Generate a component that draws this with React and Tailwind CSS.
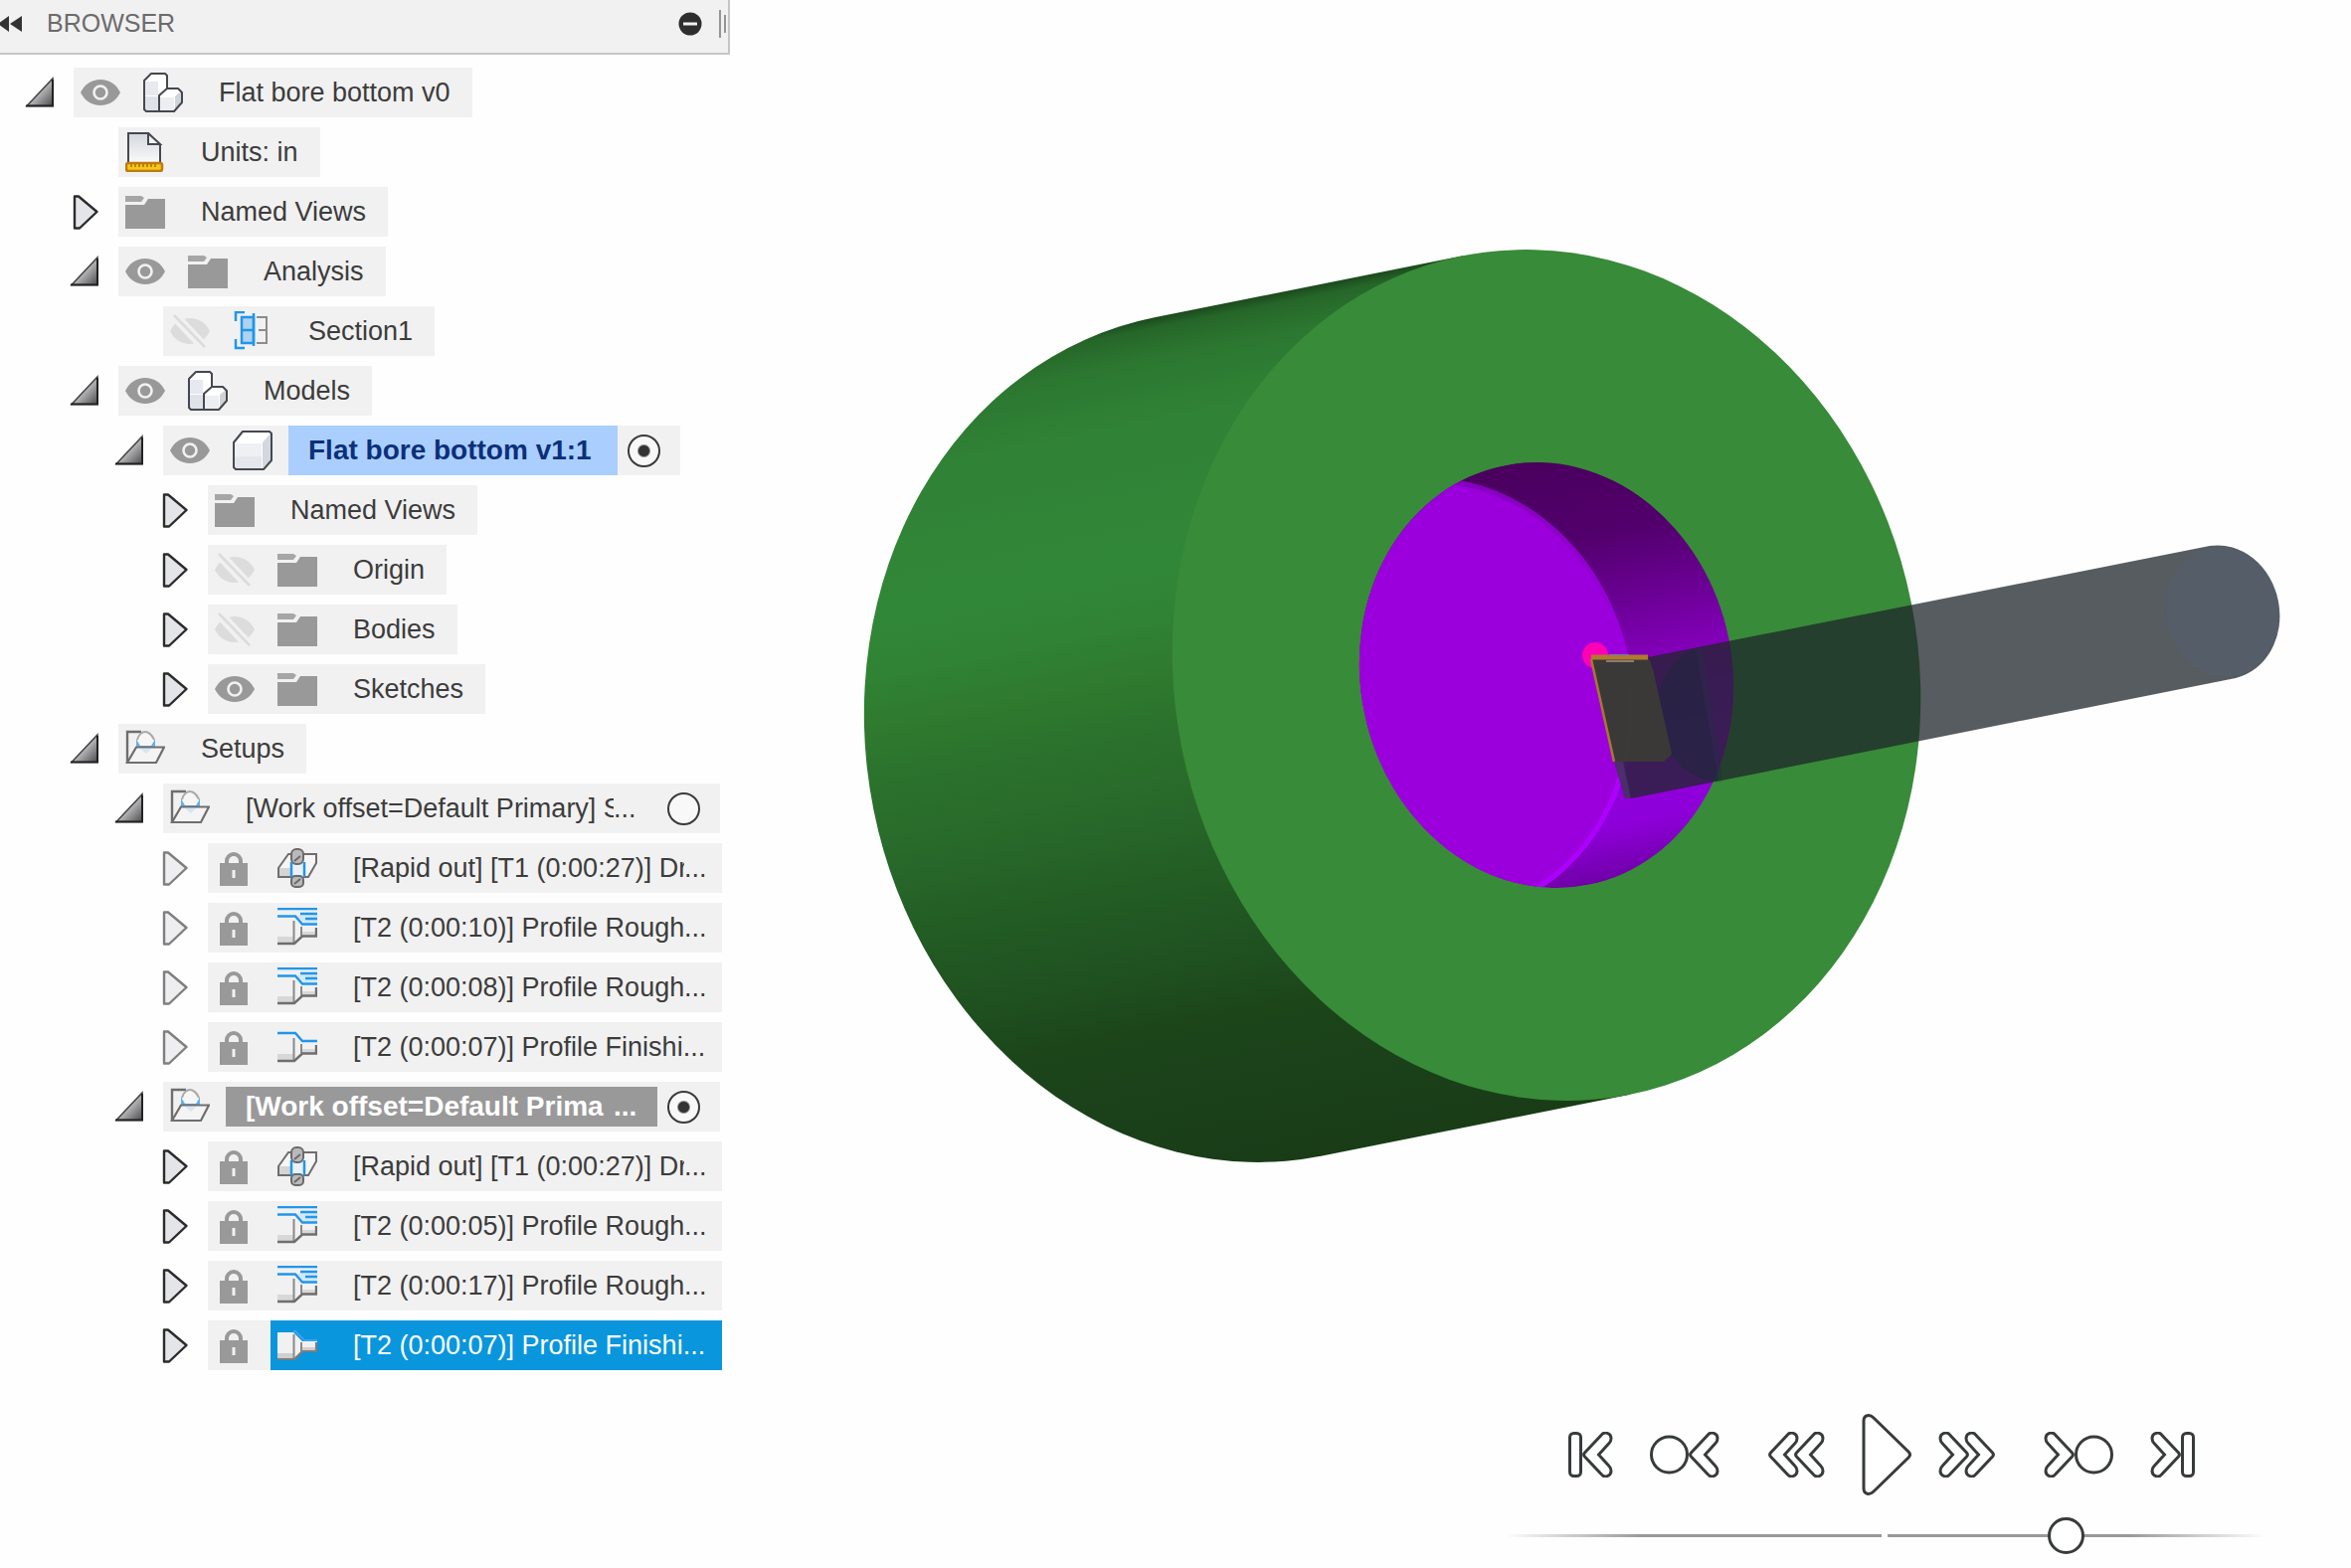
import { useState } from "react";

function EyeIcon() {
  return (
    <svg viewBox="0 0 40 40" className="size-10">
      <path d="M0 20C4 12 11 7 20 7s16 5 20 13c-4 8-11 13-20 13S4 28 0 20Z" fill="#999" />
      <circle cx="20" cy="20" r="6.5" fill="#999" stroke="#f1f1f1" strokeWidth="2.6" />
    </svg>
  );
}

function EyeOffIcon() {
  return (
    <svg viewBox="0 0 40 40" className="size-10">
      <path d="M0 20C4 12 11 7 20 7s16 5 20 13c-4 8-11 13-20 13S4 28 0 20Z" fill="#dcdcdc" />
      <path d="M3 3 35 37" stroke="#f1f1f1" strokeWidth="10" />
      <path d="M4 4 35 36" stroke="#dcdcdc" strokeWidth="2.6" />
    </svg>
  );
}

function ComponentIcon() {
  return (
    <svg viewBox="0 0 40 40" className="size-10" strokeLinejoin="round">
      <path d="M1 8 8 1h14l2 2v13h11l4 4v10l-8 9H3l-2-2Z" fill="#fff" />
      <path d="M2 9h13v14H2Z" fill="#e6e9ef" />
      <path d="M2 24h14v14H2Z" fill="#dfe2e8" />
      <path d="M17 25h14v13H17Z" fill="#eceef2" />
      <path d="M32 24l6-5v11l-6 8Z" fill="#cfd3da" />
      <path d="M1 8 8 1h14l2 2v13h11l4 4v10l-8 9H3l-2-2ZM24 16l-8 7v16" fill="none" stroke="#45484f" strokeWidth="2" />
    </svg>
  );
}

function BodyIcon() {
  return (
    <svg viewBox="0 0 40 40" className="size-10" strokeLinejoin="round">
      <path d="M1 12 10 1h27l2 2v27l-8 9H3l-2-2Z" fill="#fff" />
      <path d="M2 13h27v25H2Z" fill="#eef0f4" />
      <path d="M2 26h27v12H2Z" fill="#e4e6ec" />
      <path d="M30 12l8-9v27l-8 8Z" fill="#d3d7de" />
      <path d="M1 12 10 1h27l2 2v27l-8 9H3l-2-2Z" fill="none" stroke="#45484f" strokeWidth="2" />
    </svg>
  );
}

function UnitsIcon() {
  return (
    <svg viewBox="0 0 40 40" className="size-10">
      <defs>
        <linearGradient id="page" x1="0" y1="0" x2="0" y2="1">
          <stop offset="0" stopColor="#d3d7de" />
          <stop offset="1" stopColor="#fafafa" />
        </linearGradient>
      </defs>
      <path d="M3 31V1h20l12 12v18" fill="url(#page)" stroke="#45484f" strokeWidth="2" />
      <path d="M23 1v11h12Z" fill="#f4f5f7" stroke="#45484f" strokeWidth="2" />
      <rect x="1" y="31" width="36" height="8" rx="2" fill="#f5c716" stroke="#bf7a12" strokeWidth="2.5" />
      <path d="M6 32v3M10 32v3M14 32v3M18 32v3M22 32v3M26 32v3M30 32v3" stroke="#a86c10" strokeWidth="1.5" />
    </svg>
  );
}

function FolderIcon() {
  return (
    <svg viewBox="0 0 40 40" className="size-10">
      <path d="M0 4h16l3 2-3 4H0Z" fill="#a6a6a6" />
      <path d="M0 13h19l4-6h17v30H0Z" fill="#999" />
    </svg>
  );
}

function SectionIcon() {
  return (
    <svg viewBox="0 0 40 40" className="size-10" fill="none">
      <path d="M12 1H3v9M3 28v9h9" stroke="#2196ea" strokeWidth="2.5" />
      <path d="M9 6h12v26H9Z" fill="#aed3f0" stroke="#2196ea" strokeWidth="2.5" />
      <path d="M9 19h12M21 2v33" stroke="#2196ea" strokeWidth="2.5" />
      <path d="M24 6h10v26H24M26 19h8" stroke="#8c8c8c" strokeWidth="2" />
    </svg>
  );
}

function SetupIcon() {
  return (
    <svg viewBox="0 0 40 40" className="size-10" fill="none">
      <path d="M16 3H2v31" stroke="#6e6e6e" strokeWidth="2.4" />
      <path d="M11 10v8h19v-8l-4 6H15Z" fill="#62b2ee" />
      <path d="M12 12 17 4h7l5 8-3 5H15Z" fill="#f6f6f6" />
      <path d="M12 11c1-5 5-8 8-8s7 3 9 8" stroke="#a9a9a9" strokeWidth="2" />
      <path d="M11 18.5h28L31 34H2Z" fill="#f4f4f4" stroke="#6e6e6e" strokeWidth="2.2" />
      <path d="M15 20h11l-5 5Z" fill="#d4e6f4" />
    </svg>
  );
}

function LockIcon() {
  return (
    <svg viewBox="0 0 40 40" className="size-10">
      <path d="M12 16v-3a7 7 0 0 1 14 0v3" fill="none" stroke="#999" strokeWidth="4" />
      <path d="M5 15h28v23H5Z" fill="#999" />
      <path d="M17.5 22h3v8h-3Z" fill="#f1f1f1" />
    </svg>
  );
}

function DrillIcon() {
  return (
    <svg viewBox="0 0 40 40" className="size-10">
      <path d="M1 29v-9L11 6h28v9l-8 14Z" fill="#f6f6f6" />
      <path d="M2 20h11v8H2Z" fill="#d5d5d5" />
      <path d="M1 29v-9L11 6h28v9l-8 14Z" fill="none" stroke="#6e6e6e" strokeWidth="2" />
      <path d="M14 15h12v14H14Z" fill="#eaf1f7" />
      <rect x="14" y="1" width="12" height="15" rx="5" fill="#b9b9b9" stroke="#6a6a6a" strokeWidth="2" />
      <rect x="14" y="28" width="12" height="11" rx="4" fill="#b9b9b9" stroke="#6a6a6a" strokeWidth="2" />
      <path d="M17 13l6-5M17 36l6-5" stroke="#6a6a6a" strokeWidth="2" />
      <path d="M14 14v15M27 14v15" stroke="#2196ea" strokeWidth="2.5" />
    </svg>
  );
}

function RoughIcon() {
  return (
    <svg viewBox="0 0 40 40" className="size-10" fill="none">
      <path d="M24 6h16v10H27l-7-7Z" fill="#d5e8f7" />
      <path d="M0 1h40M23 6h17M28 11h12M0 8.5h18l7 8h15" stroke="#2196ea" strokeWidth="2.4" />
      <path d="M0 29h16v7H0ZM25 24h13v4H25Z" fill="#d8d8d8" />
      <path d="M16.5 13v22M24 19v9" stroke="#8a8a8a" strokeWidth="2" />
      <path d="M0 36h17l8-7.500h14V20" stroke="#6e6e6e" strokeWidth="2.4" />
    </svg>
  );
}

function FinishIcon() {
  return (
    <svg viewBox="0 0 40 40" className="size-10" fill="none">
      <path d="M0 6h18l7 8h15" stroke="#2196ea" strokeWidth="2.4" />
      <path d="M0 27h16v7H0ZM25 22h13v4H25Z" fill="#d8d8d8" />
      <path d="M16.5 11v22M24 17v9" stroke="#8a8a8a" strokeWidth="2" />
      <path d="M0 34h17l8-7.500h14V18" stroke="#6e6e6e" strokeWidth="2.4" />
    </svg>
  );
}

function FinishSelectedIcon() {
  return (
    <svg viewBox="0 0 40 40" className="size-10" fill="none">
      <path d="M16 6h2l9 9h13" stroke="#3fa0f5" strokeWidth="2" />
      <path d="M0 7h16l9 9h15v10H25l-8 8H0Z" fill="#f1f1f1" />
      <path d="M0 28h16v6H0ZM25 22h13v4H25Z" fill="#cfcfcf" />
      <path d="M16.5 9v24M24 17v9" stroke="#8a8a8a" strokeWidth="2" />
      <path d="M0 34h17l8-8h14v-9" stroke="#7d7d7d" strokeWidth="2.2" />
    </svg>
  );
}

const icons = {
  eye: EyeIcon,
  eyeOff: EyeOffIcon,
  component: ComponentIcon,
  body: BodyIcon,
  units: UnitsIcon,
  folder: FolderIcon,
  section: SectionIcon,
  setup: SetupIcon,
  lock: LockIcon,
  drill: DrillIcon,
  rough: RoughIcon,
  finish: FinishIcon,
  finishSelected: FinishSelectedIcon,
};

const indents = ["pl-[24px]", "pl-[69px]", "pl-[114px]", "pl-[159px]"];

const rows = [
  { level: 0, arrow: "open", icons: ["eye", "component"], label: "Flat bore bottom v0" },
  { level: 1, icons: ["units"], label: "Units: in" },
  { level: 1, arrow: "closed", icons: ["folder"], label: "Named Views" },
  { level: 1, arrow: "open", icons: ["eye", "folder"], label: "Analysis" },
  { level: 2, icons: ["eyeOff", "section"], label: "Section1" },
  { level: 1, arrow: "open", icons: ["eye", "component"], label: "Models" },
  { level: 2, arrow: "open", icons: ["eye", "body"], label: "Flat bore bottom v1:1", kind: "active", radio: "model" },
  { level: 3, arrow: "closed", icons: ["folder"], label: "Named Views" },
  { level: 3, arrow: "closed", icons: ["eyeOff", "folder"], label: "Origin" },
  { level: 3, arrow: "closed", icons: ["eyeOff", "folder"], label: "Bodies" },
  { level: 3, arrow: "closed", icons: ["eye", "folder"], label: "Sketches" },
  { level: 1, arrow: "open", icons: ["setup"], label: "Setups" },
  { level: 2, arrow: "open", icons: ["setup"], label: "[Work offset=Default Primary] S", kind: "setup", radio: "setup", value: "a" },
  { level: 3, arrow: "dim", icons: ["lock", "drill"], label: "[Rapid out] [T1 (0:00:27)] Dr", kind: "op" },
  { level: 3, arrow: "dim", icons: ["lock", "rough"], label: "[T2 (0:00:10)] Profile Rough", kind: "op" },
  { level: 3, arrow: "dim", icons: ["lock", "rough"], label: "[T2 (0:00:08)] Profile Rough", kind: "op" },
  { level: 3, arrow: "dim", icons: ["lock", "finish"], label: "[T2 (0:00:07)] Profile Finishi", kind: "op" },
  { level: 2, arrow: "open", icons: ["setup"], label: "[Work offset=Default Prima", kind: "setupActive", radio: "setup", value: "b" },
  { level: 3, arrow: "closed", icons: ["lock", "drill"], label: "[Rapid out] [T1 (0:00:27)] Dr", kind: "op" },
  { level: 3, arrow: "closed", icons: ["lock", "rough"], label: "[T2 (0:00:05)] Profile Rough", kind: "op" },
  { level: 3, arrow: "closed", icons: ["lock", "rough"], label: "[T2 (0:00:17)] Profile Rough", kind: "op" },
  { level: 3, arrow: "closed", icons: ["lock", "finishSelected"], label: "[T2 (0:00:07)] Profile Finishi", kind: "op", selected: true },
];

function Arrow({ type, label }) {
  if (!type) return <span className="w-[50px] shrink-0" />;

  return (
    <button type="button" aria-label={`Toggle ${label}`} className="flex h-[50px] w-[50px] shrink-0 items-center">
      {type === "open" ? (
        <svg viewBox="0 0 32 50" className="h-[50px] w-8">
          <defs>
            <linearGradient id="openArrow" x1="0" y1="0" x2="1" y2="1">
              <stop offset="0.35" stopColor="#d9dade" />
              <stop offset="1" stopColor="#4a4a4a" />
            </linearGradient>
          </defs>
          <path d="M3 38.5 29 11v27.500Z" fill="url(#openArrow)" stroke="#444" strokeWidth="1.5" />
          <path d="M2 38.5h27V12" fill="none" stroke="#222" strokeWidth="2" />
        </svg>
      ) : (
        <svg viewBox="0 0 32 50" className={type === "dim" ? "h-[50px] w-8 opacity-60" : "h-[50px] w-8"}>
          <path
            d="M6 9.5h4L28.5 25 11 41.5H6Z"
            fill="#e4e5e9"
            stroke="#2b2b2b"
            strokeWidth="2.4"
            strokeLinejoin="round"
          />
        </svg>
      )}
    </button>
  );
}

function IconSlot({ name, label }) {
  const Icon = icons[name];
  const slot = "flex w-[63px] shrink-0 pl-[7px]";

  if (name === "eye" || name === "eyeOff") {
    return (
      <button type="button" aria-label={`Show or hide ${label}`} className={slot}>
        <Icon />
      </button>
    );
  }
  return (
    <span className={slot}>
      <Icon />
    </span>
  );
}

function Label({ kind, children }) {
  if (kind === "active") {
    return (
      <span className="flex h-full items-center bg-[#aacfff] pr-[26px] pl-5 text-[28px] font-bold text-[#0c2f7a]">
        {children}
      </span>
    );
  }
  if (kind === "setupActive") {
    return (
      <span className="flex h-10 w-[434px] items-center bg-[#999] pl-5 text-[28px] font-bold text-white">
        <span className="w-[370px] overflow-hidden">{children}</span>...
      </span>
    );
  }
  if (kind === "setup") {
    return (
      <span className="flex w-[434px] pl-5 text-[27px]">
        <span className="w-[370px] overflow-hidden">{children}</span>...
      </span>
    );
  }
  if (kind === "op") {
    return (
      <span className="flex w-[391px] pl-5 text-[27px]">
        <span className="max-w-[333px] overflow-hidden">{children}</span>...
      </span>
    );
  }
  return <span className="pr-[22px] pl-5 text-[27px]">{children}</span>;
}

function TreeRow({ row, checked, onCheck }) {
  const [first, second] = row.icons;

  return (
    <li className={`flex ${indents[row.level]}`}>
      <Arrow type={row.arrow} label={row.label} />
      <div className="flex h-[50px] items-center bg-[#f1f1f1]">
        <IconSlot name={first} label={row.label} />
        <div className={`flex h-full items-center ${row.selected ? "bg-[#0996dc] text-white" : ""}`}>
          {second && <IconSlot name={second} label={row.label} />}
          <Label kind={row.kind}>{row.label}</Label>
        </div>
        {row.radio && (
          <input
            type="radio"
            name={row.radio}
            aria-label={`Activate ${row.label}`}
            checked={checked}
            onChange={onCheck}
            className="mr-5 ml-2.5 size-[33px] appearance-none rounded-full border-2 border-[#3a3a3a] bg-[#f8f8f8] checked:bg-[radial-gradient(circle,#333_5px,#f8f8f8_7px)]"
          />
        )}
      </div>
    </li>
  );
}

function Browser() {
  const [setup, setSetup] = useState("b");

  return (
    <aside className="w-[734px] shrink-0">
      <header className="flex h-[55px] items-center border-r-2 border-b-2 border-[#c6c6c6] bg-[#f1f1f1] pb-1.5">
        <button type="button" aria-label="Collapse browser">
          <svg viewBox="0 0 22 16" className="h-4 w-[22px]" fill="#333">
            <path d="M9 0v16L-2 8ZM22 0v16L10 8Z" />
          </svg>
        </button>
        <h1 className="ml-[25px] text-[25px] text-[#6b6b6b]">BROWSER</h1>
        <button type="button" aria-label="Minimize" className="ml-auto">
          <svg viewBox="0 0 24 24" className="size-6">
            <circle cx="12" cy="12" r="11.5" fill="#2e2e2e" />
            <path d="M5 12h14" stroke="#f1f1f1" strokeWidth="3" />
          </svg>
        </button>
        <svg viewBox="0 0 8 30" className="mr-[2px] ml-4 h-[30px] w-2" stroke="#777" strokeWidth="1.5">
          <path d="M2 1v28M7 6v18" />
        </svg>
      </header>

      <ul className="flex flex-col gap-2.5 pt-[13px] whitespace-nowrap text-[#3c3c3c]">
        {rows.map((row, index) => (
          <TreeRow
            key={index}
            row={row}
            checked={row.radio === "model" || (row.radio === "setup" && row.value === setup)}
            onCheck={() => row.value && setSetup(row.value)}
          />
        ))}
      </ul>
    </aside>
  );
}

function Viewport() {
  return (
    <svg viewBox="734 0 1630 1422" className="w-full" role="img" aria-label="Bored part with boring bar">
      <defs>
        <linearGradient id="side" x1="0" y1="0" x2="0" y2="1">
          <stop offset="0" stopColor="#1b4a1d" />
          <stop offset="0.012" stopColor="#266629" />
          <stop offset="0.05" stopColor="#2c7831" />
          <stop offset="0.12" stopColor="#308236" />
          <stop offset="0.28" stopColor="#318738" />
          <stop offset="0.34" stopColor="#308335" />
          <stop offset="0.4" stopColor="#2f7b2f" />
          <stop offset="0.47" stopColor="#2b722d" />
          <stop offset="0.56" stopColor="#28692a" />
          <stop offset="0.67" stopColor="#225a23" />
          <stop offset="0.75" stopColor="#1f5020" />
          <stop offset="0.82" stopColor="#1c451a" />
          <stop offset="0.92" stopColor="#1a401a" />
          <stop offset="1" stopColor="#193c17" />
        </linearGradient>
        <linearGradient id="wall" x1="0" y1="0" x2="0" y2="1">
          <stop offset="0" stopColor="#4a005e" />
          <stop offset="0.2" stopColor="#52006c" />
          <stop offset="0.35" stopColor="#690092" />
          <stop offset="0.5" stopColor="#8200b8" />
          <stop offset="0.7" stopColor="#9400e0" />
          <stop offset="0.88" stopColor="#8d00d8" />
          <stop offset="1" stopColor="#7000a8" />
        </linearGradient>
        <linearGradient id="rim" x1="0" y1="0" x2="0" y2="1">
          <stop offset="0" stopColor="#8400bc" />
          <stop offset="0.5" stopColor="#9e00e4" />
          <stop offset="0.65" stopColor="#ae00ff" />
          <stop offset="1" stopColor="#ae00ff" />
        </linearGradient>
        <clipPath id="bore">
          <ellipse cx="1555" cy="679" rx="187" ry="215" />
        </clipPath>
      </defs>

      {/* part, drawn along its own axis */}
      <g transform="rotate(-11.3 1555 679)">
        <path d="M1555 249H1239a374 430 0 0 0 0 860h316Z" fill="url(#side)" />
        <ellipse cx="1555" cy="679" rx="374" ry="430" fill="#388b38" />
        <g clipPath="url(#bore)">
          <rect x="1368" y="464" width="375" height="430" fill="url(#wall)" />
          <ellipse cx="1443" cy="679" rx="194" ry="219" fill="#9b00dc" stroke="url(#rim)" strokeWidth="5" />
        </g>
      </g>

      {/* boring bar */}
      <circle cx="1604" cy="659" r="13" fill="#ff00b4" />
      <path
        d="M1657 661 2222 549A59 67.8 -11.3 0 1 2248 682L1640 803H1634L1623 766 1600 663Z"
        fill="#1e262a"
        fillOpacity="0.75"
      />
      <ellipse
        cx="2235"
        cy="615"
        rx="57"
        ry="66"
        transform="rotate(-11.3 2235 615)"
        fill="#50648c"
        fillOpacity="0.2"
      />
      <path d="M1709 652A59 67.8 -11.3 0 0 1734 785H1728L1705 653Z" fill="#192838" fillOpacity="0.5" />
      <path d="M1705 653l7-1 20 131-5 1Z" fill="#243044" fillOpacity="0.4" />
      <path d="M1623 766 1634 803h6l-8-37Z" fill="#5a4080" fillOpacity="0.5" />
      <path d="M1600 663 1657 659 1662 673 1681 758 1673 766H1623Z" fill="#3b3b37" fillOpacity="0.95" />
      <path d="M1600 661h57" stroke="#b07a2c" strokeWidth="5" />
      <path d="M1618 659h20M1615 665h28" stroke="#8c7a72" strokeWidth="2" />
      <path d="M1600 663 1623 766" stroke="#a8782e" strokeWidth="2.5" />
    </svg>
  );
}

function ToStart() {
  return (
    <svg viewBox="0 0 46 46" className="h-[46px] w-[46px]">
      <rect x="1.5" y="1.5" width="11" height="43" rx="4" />
      <path d="M16.5 21 33 3.5a5.5 5.5 0 0 1 10 3c0 2-1 4-2 5L30.5 23 41 34.5c1 1 2 3 2 5a5.5 5.5 0 0 1-10 3L16.5 25a3 3 0 0 1 0-4Z" />
    </svg>
  );
}

function PrevOperation() {
  return (
    <svg viewBox="0 0 71 46" className="h-[46px] w-[71px]">
      <circle cx="19.5" cy="23" r="18" />
      <path d="M41.5 21 58 3.5a5.5 5.5 0 0 1 10 3c0 2-1 4-2 5L55.5 23 66 34.5c1 1 2 3 2 5a5.5 5.5 0 0 1-10 3L41.5 25a3 3 0 0 1 0-4Z" />
    </svg>
  );
}

function Rewind() {
  return (
    <svg viewBox="0 0 58 46" className="h-[46px] w-[58px]">
      <path d="M2.5 21 19 3.5a5.5 5.5 0 0 1 10 3c0 2-1 4-2 5L16.5 23 27 34.5c1 1 2 3 2 5a5.5 5.5 0 0 1-10 3L2.5 25a3 3 0 0 1 0-4Z" />
      <path d="M28.5 21 45 3.5a5.5 5.5 0 0 1 10 3c0 2-1 4-2 5L42.5 23 53 34.5c1 1 2 3 2 5a5.5 5.5 0 0 1-10 3L28.5 25a3 3 0 0 1 0-4Z" />
    </svg>
  );
}

function Play() {
  return (
    <svg viewBox="0 0 50 82" className="h-[82px] w-[50px]">
      <path d="M2 7c0-6 6-7 10-3l35 34c2 2 2 4 0 6L12 78c-4 4-10 3-10-3Z" />
    </svg>
  );
}

function PlaybackButton({ label, className, children }) {
  return (
    <button type="button" aria-label={label} className={className}>
      {children}
    </button>
  );
}

function Playback() {
  const [position, setPosition] = useState(75);

  return (
    <div className="mr-[86px] flex w-[765px] flex-col">
      <div className="flex items-center justify-center gap-9 pr-2 [&_svg]:fill-white [&_svg]:stroke-[#383b3c] [&_svg]:stroke-[3px]">
        <PlaybackButton label="Go to start">
          <ToStart />
        </PlaybackButton>
        <PlaybackButton label="Previous operation">
          <PrevOperation />
        </PlaybackButton>
        <PlaybackButton label="Rewind" className="ml-3">
          <Rewind />
        </PlaybackButton>
        <PlaybackButton label="Play">
          <Play />
        </PlaybackButton>
        <PlaybackButton label="Fast forward" className="-ml-2.5 -scale-x-100">
          <Rewind />
        </PlaybackButton>
        <PlaybackButton label="Next operation" className="ml-3 -scale-x-100">
          <PrevOperation />
        </PlaybackButton>
        <PlaybackButton label="Go to end" className="-scale-x-100">
          <ToStart />
        </PlaybackButton>
      </div>
      <input
        type="range"
        aria-label="Simulation position"
        min="0"
        max="100"
        value={position}
        onChange={(e) => setPosition(Number(e.target.value))}
        className="mt-5 h-10 w-full appearance-none bg-[linear-gradient(to_right,transparent,#999_18%,#999_49.5%,transparent_49.5%,transparent_50.3%,#999_50.3%,#999_82%,transparent)] bg-[length:100%_3px] bg-center bg-no-repeat [&::-webkit-slider-thumb]:size-[37px] [&::-webkit-slider-thumb]:appearance-none [&::-webkit-slider-thumb]:rounded-full [&::-webkit-slider-thumb]:border-[3px] [&::-webkit-slider-thumb]:border-[#383b3c] [&::-webkit-slider-thumb]:bg-white"
      />
    </div>
  );
}

function App() {
  return (
    <div className="flex min-h-screen bg-[#fefefe] font-['Liberation_Sans',Arial,sans-serif] leading-normal">
      <Browser />
      <main className="flex min-w-0 flex-1 flex-col items-end">
        <Viewport />
        <Playback />
      </main>
    </div>
  );
}

export default App;
